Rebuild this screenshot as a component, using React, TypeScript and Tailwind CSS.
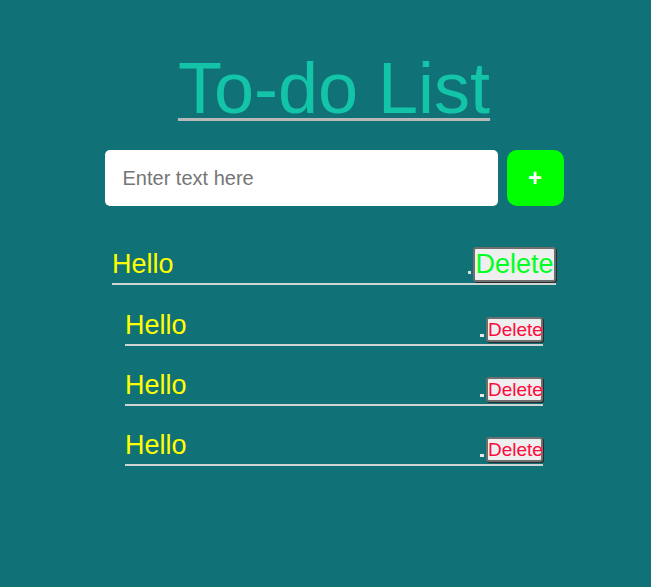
const items = ["Hello", "Hello", "Hello", "Hello"];

const App = () => {
  return (
    <section className="min-h-[587px] w-full bg-[#107177] font-['Liberation_Sans',Arial,sans-serif] flex flex-col items-center pl-[17px] pt-[52px]">
      <h1 className="text-[72px] leading-none text-[#14c4a8] underline decoration-[#b8b8b8] decoration-[3px] underline-offset-[5px]">
        To-do List
      </h1>

      <div className="flex gap-[9px] mt-[26px]">
        <input
          type="text"
          placeholder="Enter text here"
          className="w-[393px] h-[56px] rounded-[5px] bg-white pl-[18px] text-[20px] text-black placeholder:text-[#757575] outline-none"
        />
        <button className="w-[57px] h-[56px] rounded-[10px] bg-[#00ff00] text-white text-[24px] font-bold leading-none">
          +
        </button>
      </div>

      <ul className="flex flex-col items-center mt-[41px]">
        {items.map((text, i) =>
          i === 0 ? (
            <li key={i} className="w-[444px] flex items-end justify-between border-b-2 border-[#cfd4d4] pb-px">
              <span className="text-[27px] leading-none text-[#ffff00] pb-[4px]">{text}</span>
              <div className="flex items-end">
                <span className="w-[3px] h-[3px] bg-[#dddddd] mb-[8px] mr-[2px]" />
                <button className="w-[83px] h-[35px] bg-[#efefef] border-2 border-[#6e6e6e] rounded-[3px] shadow-[1px_1px_0_#2a2a2a] text-[27px] leading-none text-[#00ff22] px-0">
                  Delete
                </button>
              </div>
            </li>
          ) : (
            <li
              key={i}
              className={`w-[418px] flex items-end justify-between border-b-2 border-[#cfd4d4] pb-[2px] ${i === 1 ? "mt-[27px]" : "mt-[26px]"}`}
            >
              <span className="text-[27px] leading-none text-[#ffff00] pb-[3px]">{text}</span>
              <div className="flex items-end">
                <span className="w-[4px] h-[3px] bg-[#e6e6e6] mb-[5px] mr-[2px]" />
                <button className="w-[57px] h-[25px] bg-[#efefef] border-2 border-[#6e6e6e] rounded-[3px] shadow-[1px_1px_0_#2a2a2a] text-[19px] leading-none text-[#ff0a3c] px-0">
                  Delete
                </button>
              </div>
            </li>
          )
        )}
      </ul>
    </section>
  );
};

export default App;
